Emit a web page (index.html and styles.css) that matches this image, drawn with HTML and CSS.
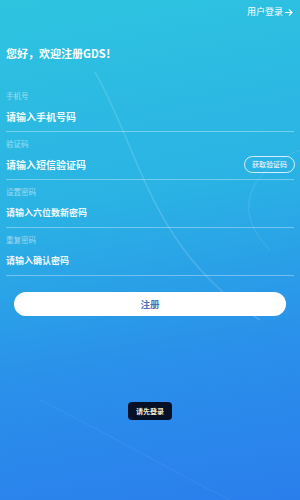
FILE: index.html
```html
<!DOCTYPE html>
<html lang="zh">
<head>
<meta charset="utf-8">
<link rel="stylesheet" href="styles.css">
</head>
<body>
<div class="page">
  <svg class="wave" viewBox="0 0 300 500" width="300" height="500" aria-hidden="true">
    <path d="M95 72 C140 150 150 250 260 320" stroke="rgba(255,255,255,0.16)" stroke-width="1.5" fill="none"/>
    <path d="M300 150 C250 170 230 210 270 250" stroke="rgba(255,255,255,0.12)" stroke-width="1" fill="none"/>
    <path d="M40 400 C120 440 170 470 230 500" stroke="rgba(255,255,255,0.07)" stroke-width="1" fill="none"/>
  </svg>
  <div class="top">
    <span class="login-link">用户登录<svg class="arrow" viewBox="0 0 10 10" width="9" height="9"><path d="M1 5 H9 M5.5 1.5 L9 5 L5.5 8.5" stroke="#fff" stroke-width="1.2" fill="none"/></svg></span>
  </div>
  <h1 class="greet">您好，欢迎注册GDS！</h1>
  <div class="form">
    <div class="field">
      <div class="label">手机号</div>
      <div class="row"><span class="ph">请输入手机号码</span></div>
    </div>
    <div class="field">
      <div class="label">验证码</div>
      <div class="row"><span class="ph">请输入短信验证码</span><span class="code-btn">获取验证码</span></div>
    </div>
    <div class="field">
      <div class="label">设置密码</div>
      <div class="row"><span class="ph small">请输入六位数新密码</span></div>
    </div>
    <div class="field">
      <div class="label">重复密码</div>
      <div class="row"><span class="ph small">请输入确认密码</span></div>
    </div>
  </div>
  <div class="btn-wrap"><div class="submit">注册</div></div>
  <div class="toast-wrap"><div class="toast">请先登录</div></div>
</div>
</body>
</html>
```
FILE: styles.css
```css
* { box-sizing: border-box; }
html, body { margin: 0; padding: 0; }
body {
  font-family: "Noto Sans CJK SC", "Noto Sans", sans-serif;
  color: #fff;
}
.page {
  position: relative;
  width: 300px;
  height: 500px;
  overflow: hidden;
  background: linear-gradient(170deg, #2ec4e0 0%, #2ab2e4 40%, #2a90ea 70%, #2a7eec 100%);
}
.wave { position: absolute; left: 0; top: 0; pointer-events: none; }
.top {
  display: flex;
  justify-content: flex-end;
  padding: 4px 7px 0 0;
  height: 20px;
}
.login-link {
  font-size: 9px;
  line-height: 14px;
  display: flex;
  align-items: center;
  gap: 1px;
}
.greet {
  margin: 25px 0 0 6px;
  font-size: 11px;
  font-weight: 700;
  line-height: 16px;
}
.form { padding: 23px 6px 0 6px; }
.field {
  border-bottom: 1px solid rgba(255,255,255,0.35);
  padding-top: 6px;
}
.label {
  font-size: 7.5px;
  line-height: 12px;
  color: rgba(255,255,255,0.55);
}
.row {
  display: flex;
  align-items: center;
  justify-content: space-between;
  height: 29px;
  padding-bottom: 1px;
}
.ph {
  font-size: 10px;
  font-weight: 700;
  color: rgba(255,255,255,0.95);
}
.ph.small { font-size: 9px; }
.code-btn {
  font-size: 7px;
  border: 1px solid rgba(255,255,255,0.8);
  border-radius: 9px;
  padding: 3px 7px;
  line-height: 9px;
  margin-right: -1px;
}
.btn-wrap { padding: 16px 14px 0 14px; }
.submit {
  background: #fff;
  color: #4a6fb2;
  height: 24px;
  border-radius: 12px;
  text-align: center;
  font-size: 9.5px;
  line-height: 24px;
  font-weight: 700;
}
.toast-wrap { display: flex; justify-content: center; padding-top: 86px; }
.toast {
  background: #061026;
  color: #f0e8d0;
  font-size: 7px;
  padding: 0 8px;
  height: 18px;
  line-height: 18px;
  border-radius: 4px;
  font-weight: 700;
}
```
